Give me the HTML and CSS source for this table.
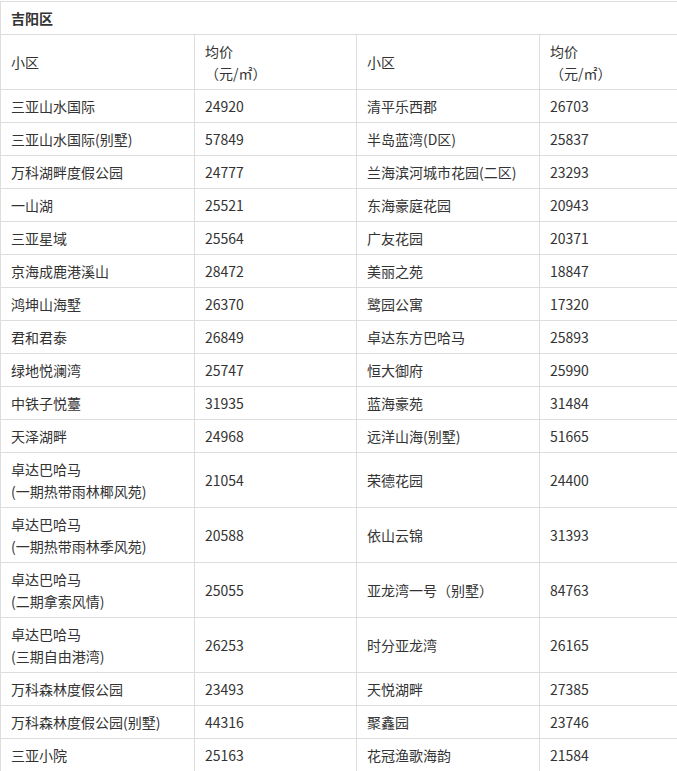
FILE: index.html
```html
<!DOCTYPE html>
<html lang="zh-CN">
<head>
<meta charset="utf-8">
<title>吉阳区</title>
<link rel="stylesheet" href="styles.css">
</head>
<body>
<table class="price-table">
  <colgroup>
    <col class="c1"><col class="c2"><col class="c3"><col class="c4">
  </colgroup>
  <thead>
    <tr><th class="title" colspan="4">吉阳区</th></tr>
    <tr class="head">
      <td>小区</td><td>均价<br>（元/㎡）</td>
      <td>小区</td><td>均价<br>（元/㎡）</td>
    </tr>
  </thead>
  <tbody>
    <tr><td>三亚山水国际</td><td>24920</td><td>清平乐西郡</td><td>26703</td></tr>
    <tr><td>三亚山水国际(别墅)</td><td>57849</td><td>半岛蓝湾(D区)</td><td>25837</td></tr>
    <tr><td>万科湖畔度假公园</td><td>24777</td><td>兰海滨河城市花园(二区)</td><td>23293</td></tr>
    <tr><td>一山湖</td><td>25521</td><td>东海豪庭花园</td><td>20943</td></tr>
    <tr><td>三亚星域</td><td>25564</td><td>广友花园</td><td>20371</td></tr>
    <tr><td>京海成鹿港溪山</td><td>28472</td><td>美丽之苑</td><td>18847</td></tr>
    <tr><td>鸿坤山海墅</td><td>26370</td><td>鹭园公寓</td><td>17320</td></tr>
    <tr><td>君和君泰</td><td>26849</td><td>卓达东方巴哈马</td><td>25893</td></tr>
    <tr><td>绿地悦澜湾</td><td>25747</td><td>恒大御府</td><td>25990</td></tr>
    <tr><td>中铁子悦薹</td><td>31935</td><td>蓝海豪苑</td><td>31484</td></tr>
    <tr><td>天泽湖畔</td><td>24968</td><td>远洋山海(别墅)</td><td>51665</td></tr>
    <tr><td>卓达巴哈马<br>(一期热带雨林椰风苑)</td><td>21054</td><td>荣德花园</td><td>24400</td></tr>
    <tr><td>卓达巴哈马<br>(一期热带雨林季风苑)</td><td>20588</td><td>依山云锦</td><td>31393</td></tr>
    <tr><td>卓达巴哈马<br>(二期拿索风情)</td><td>25055</td><td>亚龙湾一号（别墅）</td><td>84763</td></tr>
    <tr><td>卓达巴哈马<br>(三期自由港湾)</td><td>26253</td><td>时分亚龙湾</td><td>26165</td></tr>
    <tr><td>万科森林度假公园</td><td>23493</td><td>天悦湖畔</td><td>27385</td></tr>
    <tr><td>万科森林度假公园(别墅)</td><td>44316</td><td>聚鑫园</td><td>23746</td></tr>
    <tr><td>三亚小院</td><td>25163</td><td>花冠渔歌海韵</td><td>21584</td></tr>
  </tbody>
</table>
</body>
</html>
```
FILE: styles.css
```css
html, body {
  margin: 0;
  padding: 0;
  background: #fff;
}
body {
  padding-top: 1px;
  font-family: "Noto Sans CJK SC", "Noto Sans", sans-serif;
  font-size: 14px;
  color: #333;
}
.price-table {
  border-collapse: collapse;
  table-layout: fixed;
  width: 677px;
}
.c1 { width: 194px; }
.c2 { width: 162px; }
.c3 { width: 183px; }
.c4 { width: 138px; }
.price-table th,
.price-table td {
  border: 1px solid #ddd;
  padding: 5px 10px;
  line-height: 22px;
  text-align: left;
  vertical-align: middle;
  font-weight: normal;
}
.price-table th.title {
  font-weight: bold;
}
```
